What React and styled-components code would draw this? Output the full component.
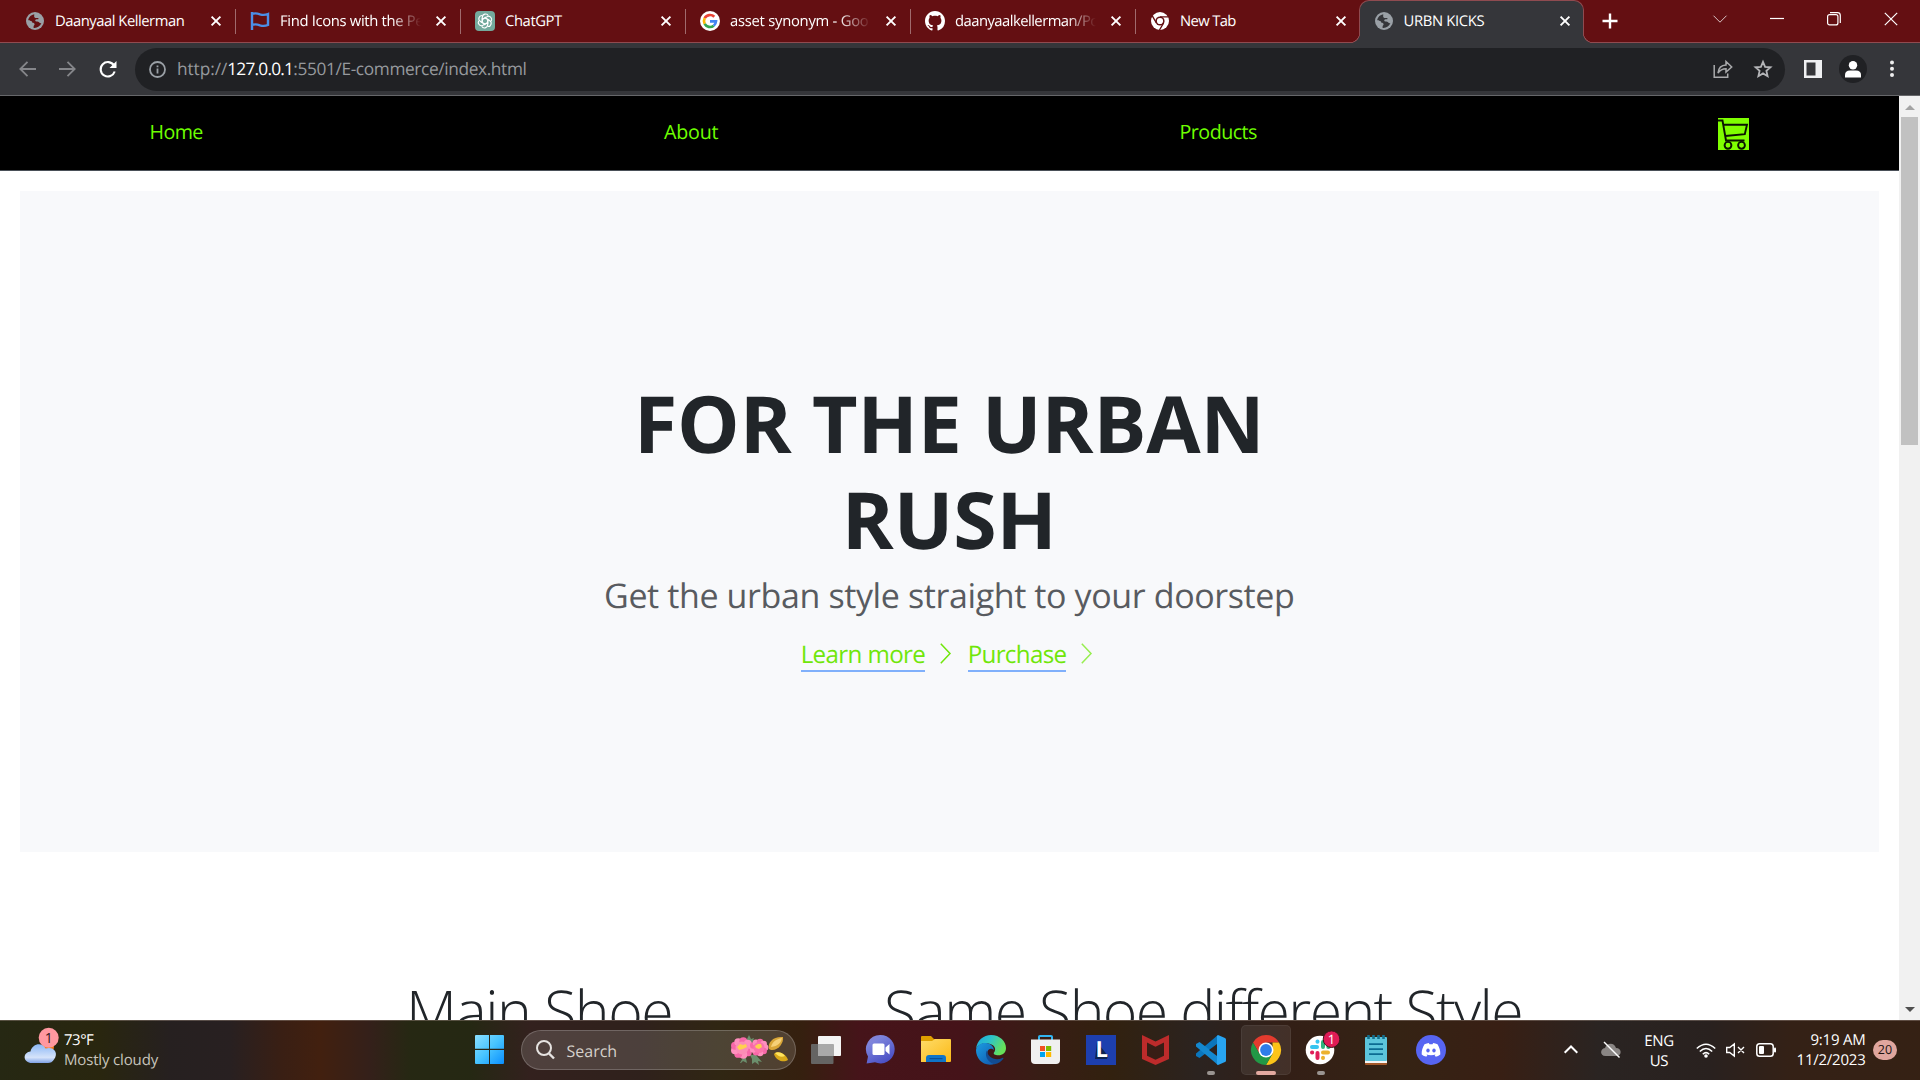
import React from "react";
import styled, { createGlobalStyle, css } from "styled-components";

const GlobalStyle = createGlobalStyle`
  * { box-sizing: border-box; }
  body { margin: 0; overflow: hidden; }
  svg { display: block; flex: none; overflow: visible; }
`;

const Desktop = styled.div`
  width: 1920px;
  height: 1080px;
  display: flex;
  flex-direction: column;
  overflow: hidden;
  background: #fff;
  font-family: "Open Sans", "Noto Sans", sans-serif;
  text-rendering: geometricPrecision;
`;

/* ---------- Browser tabs ---------- */

const TabStrip = styled.div`
  height: 43px;
  flex: none;
  display: flex;
  padding-left: 10.5px;
  background: #640f12;
  border-bottom: 1px solid #8f4b50;
`;

const flare = css`
  content: "";
  position: absolute;
  bottom: 0;
  width: 10px;
  height: 10px;
`;

const Tab = styled.div`
  position: relative;
  width: 225px;
  height: 42px;
  display: flex;
  align-items: center;
  padding: 0 0 1px 14.5px;
  color: #fff;
  ${(p) =>
    p.$active
      ? css`
          height: 43px;
          margin-left: -1.5px;
          padding-bottom: 2px;
          padding-left: 13.5px;
          background: #35363a;
          border: 1px solid #8f4b50;
          border-bottom: 0;
          border-radius: 10px 10px 0 0;
          &::before {
            ${flare}
            left: -10px;
            background: radial-gradient(circle at 0 0, transparent 9px, #8f4b50 9.3px, #8f4b50 9.8px, #35363a 10.3px);
          }
          &::after {
            ${flare}
            right: -10px;
            background: radial-gradient(circle at 100% 0, transparent 9px, #8f4b50 9.3px, #8f4b50 9.8px, #35363a 10.3px);
          }
        `
      : css`
          &::after {
            content: "";
            position: absolute;
            right: 0;
            top: 9px;
            width: 1px;
            height: 25px;
            background: ${p.$last ? "transparent" : "#a06a6d"};
          }
        `}
`;

const Favicon = styled.span`
  width: 20px;
  height: 20px;
  display: flex;
  align-items: center;
  justify-content: center;
  color: ${(p) => (p.$active ? "#35363a" : "#640f12")};
`;

const TabTitle = styled.span`
  width: 141px;
  margin: 0 10px;
  overflow: hidden;
  white-space: nowrap;
  font-size: 14.8px;
  font-weight: 430;
  line-height: 24px;
  letter-spacing: ${(p) => p.$ls}px;
  ${(p) =>
    p.$fade &&
    css`
      mask-image: linear-gradient(to right, #000 ${p.$fade}px, transparent 141px);
    `}
`;

const TabClose = styled.span`
  width: 20px;
  height: 20px;
  display: flex;
  align-items: center;
  justify-content: center;
`;

const NewTabButton = styled.div`
  width: 52px;
  height: 42px;
  display: flex;
  align-items: center;
  justify-content: center;
`;

const WindowControls = styled.div`
  display: flex;
  margin-left: auto;
`;

const WindowControl = styled.div`
  width: 57.2px;
  height: 38px;
  display: flex;
  align-items: center;
  justify-content: center;
`;

/* ---------- Browser toolbar ---------- */

const Toolbar = styled.div`
  height: 53px;
  flex: none;
  display: flex;
  align-items: center;
  padding-left: 19px;
  background: #35363a;
  border-bottom: 1px solid #66676a;
`;

const NavButtons = styled.div`
  display: flex;
  gap: 23px;
  width: 116px;
`;

const AddressBar = styled.div`
  width: 1650px;
  height: 43px;
  display: flex;
  align-items: center;
  padding: 0 13px 0 14px;
  border-radius: 22px;
  background: #202124;
`;

const Url = styled.div`
  flex: 1;
  margin-left: 11px;
  padding-top: 2px;
  display: flex;
  white-space: pre;
  color: #96999d;
  font-size: 17.3px;
  font-weight: 420;
  line-height: 26px;
`;

const UrlPart = styled.span`
  letter-spacing: ${(p) => p.$ls}px;
  color: ${(p) => (p.$host ? "#fff" : "inherit")};
`;

const AddressActions = styled.div`
  display: flex;
  align-items: center;
  gap: 21px;
`;

const ToolbarActions = styled.div`
  display: flex;
  align-items: center;
  margin-left: 19px;
`;

const Avatar = styled.div`
  width: 28px;
  height: 28px;
  margin: 0 23px 0 17px;
  border-radius: 50%;
  background: #202124;
  display: flex;
  align-items: center;
  justify-content: center;
`;

/* ---------- Web page ---------- */

const Viewport = styled.div`
  height: 924px;
  flex: none;
  display: flex;
  overflow: hidden;
`;

const Page = styled.main`
  flex: 1;
  background: #fff;
  overflow: hidden;
`;

const SiteNav = styled.nav`
  height: 75px;
  display: flex;
  justify-content: space-between;
  align-items: flex-start;
  padding: 20px 150px 0 149.5px;
  background: #000;
  border-bottom: 1px solid #4a5058;
`;

const NavLink = styled.a`
  padding-top: 1px;
  color: #6eff00;
  font-size: 19.7px;
  font-weight: 430;
  line-height: 30px;
  letter-spacing: ${(p) => p.$ls}px;
`;

const CartButton = styled.div`
  width: 31px;
  height: 32px;
  margin-top: 2px;
  background: #7fff00;
`;

const Hero = styled.section`
  height: 661px;
  margin: 20px 20.5px 0 20px;
  padding-top: 184.8px;
  display: flex;
  flex-direction: column;
  align-items: center;
  background: #f8f9fb;
`;

const HeroTitle = styled.h1`
  width: 700px;
  margin: 0;
  text-align: center;
  color: #212529;
  font-size: 78.8px;
  font-weight: 700;
  line-height: 96px;
  letter-spacing: -0.1px;
`;

const HeroSubtitle = styled.p`
  margin: 6.4px 0 0;
  color: #585b60;
  font-size: 34px;
  line-height: 42px;
  letter-spacing: -0.39px;
  white-space: nowrap;
`;

const HeroLinks = styled.div`
  display: flex;
  align-items: flex-start;
  margin-top: 23.8px;
  padding-right: 6px;
`;

const HeroLink = styled.a`
  color: #70e60a;
  font-size: 24.2px;
  font-weight: 420;
  line-height: 30px;
  letter-spacing: ${(p) => p.$ls}px;
  border-bottom: 2px solid #80b0fb;
`;

const HeroChevron = styled.span`
  margin: 3px ${(p) => p.$after}px 0 14.500px;
`;

const Sections = styled.section`
  display: flex;
  margin-top: 122.6px;
  padding-left: 406px;
  gap: 215px;
`;

const SectionTitle = styled.h2`
  margin: 0;
  width: ${(p) => p.$w}px;
  white-space: nowrap;
  color: #212529;
  font-size: 59px;
  font-weight: 300;
  line-height: 72px;
  letter-spacing: ${(p) => p.$ls}px;
`;

const Scrollbar = styled.div`
  width: 21px;
  display: flex;
  flex-direction: column;
  align-items: center;
  background: #f1f1f1;
`;

const ScrollArrow = styled.div`
  height: 21px;
  display: flex;
  align-items: center;
  justify-content: center;
`;

const ScrollThumb = styled.div`
  width: 17px;
  height: 328px;
  margin-bottom: auto;
  background: #c1c1c1;
`;

/* ---------- Taskbar ---------- */

const Taskbar = styled.footer`
  height: 60px;
  flex: none;
  display: grid;
  grid-template-columns: 461.5px auto 1fr;
  border-top: 1px solid rgba(130, 115, 105, 0.55);
  background: linear-gradient(
    to right,
    #262813 0, #29260f 100px, #262020 170px, #282021 230px, #391f14 280px,
    #42200f 320px, #34201a 370px, #262813 410px, #252813 470px, #33211e 530px,
    #2f211c 640px, #302613 720px, #35200f 800px, #46141a 860px, #451319 960px,
    #381d15 1040px, #32210f 1110px, #2b2320 1200px, #331f16 1290px, #352314 1400px,
    #381f14 1500px, #2a2422 1600px, #29211f 1710px, #342116 1790px, #352114 1920px
  );
  color: #fff;
`;

const Weather = styled.div`
  display: flex;
  align-items: flex-start;
  padding: 8px 0 0 24px;
`;

const WeatherIcon = styled.div`
  width: 40px;
`;

const TextStack = styled.div`
  display: flex;
  flex-direction: column;
  align-items: ${(p) => p.$align || "flex-start"};
  padding-top: ${(p) => p.$drop || 0}px;
  font-size: 15px;
  line-height: 20px;
  white-space: nowrap;
`;

const StackLine = styled.span`
  letter-spacing: ${(p) => p.$ls}px;
  color: ${(p) => (p.$muted ? "#c8c5bd" : "#fff")};
`;

const Apps = styled.div`
  display: flex;
  align-items: center;
`;

const AppCell = styled.div`
  position: relative;
  width: 55px;
  height: 59px;
  padding-bottom: 2px;
  display: flex;
  align-items: center;
  justify-content: center;
`;

const ActiveAppCell = styled(AppCell)`
  &::before {
    content: "";
    position: absolute;
    inset: 4px 2.5px 5px;
    border-radius: 5px;
    background: rgba(255, 255, 255, 0.08);
    border: 1px solid rgba(255, 255, 255, 0.06);
  }
`;

const AppGlyph = styled.span`
  position: relative;
`;

const Running = styled.span`
  position: absolute;
  bottom: 5px;
  left: 50%;
  transform: translateX(-50%);
  width: ${(p) => (p.$focused ? 20 : 8)}px;
  height: 4px;
  border-radius: 2px;
  background: ${(p) => (p.$focused ? "#e3a9a0" : "#9a9491")};
`;

const SearchBox = styled.div`
  width: 275px;
  height: 40px;
  margin: 0 2.500px 1px 4px;
  padding: 0 6px 0 14px;
  display: flex;
  align-items: center;
  border-radius: 20px;
  border: 1px solid rgba(255, 255, 255, 0.2);
  background: rgba(255, 255, 255, 0.14);
`;

const SearchLabel = styled.span`
  flex: 1;
  margin-left: 12px;
  padding-top: 1px;
  color: #d6d1cb;
  font-size: 16px;
  line-height: 22px;
`;

const Tray = styled.div`
  display: flex;
  align-items: center;
  justify-content: flex-end;
  padding: 0 23px 1px 0;
`;

const TrayItem = styled.div`
  width: ${(p) => p.$w}px;
  margin-right: ${(p) => p.$gap}px;
  display: flex;
  flex-direction: column;
  align-items: ${(p) => p.$align || "center"};
`;

const NotificationCount = styled.div`
  width: 24px;
  height: 20px;
  border-radius: 10px;
  background: #e0a69e;
  color: #1c1210;
  font-size: 12.5px;
  line-height: 20px;
  text-align: center;
`;

/* ---------- Icons ---------- */

const Globe = () => (
  <svg width="18" height="18" viewBox="0 0 18 18">
    <circle cx="9" cy="9" r="9" fill="#9aa0a6" />
    <path fill="currentColor" d="M8.2 2.2c-3 .6-5.2 2.6-6 5.4.4 1.300 1.600 1.400 2.800 1.400 1 .2 1.400.9 1.300 1.800 1.100.1 2.100.3 2.300 1.400.1 1-.9 1.200-1 2.100v1.700c3.500.4 6.700-1.800 7.800-4.900-1.200.6-2-.2-2.600-1-.8-.8-2.200-.4-3.200-.9-.8-.7-.2-1.900.9-2 .9-.1 1.500.2 2-.3.4-.8-.6-1.100-1.500-1-1.100.2-2.500.1-2.800-1.100-.2-1 .2-1.700 0-2.600z" />
  </svg>
);

const Flag = () => (
  <svg width="20" height="20" viewBox="0 0 20 20" fill="none" stroke="#4b8fe8" strokeWidth="2.400">
    <path d="M2 1v18M2 3c3-1.200 5.500-.6 8 .3 2.500.8 5 .9 8-.3v11c-3 1.200-5.500 1.100-8 .3-2.500-.9-5-1.500-8-.3" />
  </svg>
);

const ChatGpt = () => (
  <svg width="20" height="20" viewBox="0 0 20 20">
    <rect width="20" height="20" rx="4" fill="#74aa9c" />
    <g fill="none" stroke="#fff" strokeWidth="1.1">
      {[0, 60, 120, 180, 240, 300].map((a) => (
        <path key={a} transform={`rotate(${a} 10 10)`} d="M7.300 11.600V6.400c0-3.700 4.600-4.400 6-1.700M7.300 8.300l4-2.300" />
      ))}
    </g>
  </svg>
);

const Google = () => (
  <svg width="20" height="20" viewBox="0 0 20 20">
    <circle cx="10" cy="10" r="10" fill="#fff" />
    <g fill="none" strokeWidth="2.700">
      <path stroke="#ea4335" d="M14.300 5.800A6 6 0 0 0 4.700 7.200" />
      <path stroke="#fbbc05" d="M4.700 7.200a6 6 0 0 0 0 5.600" />
      <path stroke="#34a853" d="M4.700 12.800a6 6 0 0 0 9 1.900" />
      <path stroke="#4285f4" d="M13.700 14.700A6 6 0 0 0 16 10.300h-6" />
    </g>
  </svg>
);

const GitHub = () => (
  <svg width="20" height="20" viewBox="0 0 16 16">
    <path fill="#fff" d="M8 0C3.580 0 0 3.580 0 8c0 3.540 2.290 6.530 5.470 7.590.4.070.55-.17.55-.38 0-.19-.01-.82-.01-1.490-2.010.37-2.530-.49-2.690-.94-.09-.23-.48-.94-.82-1.130-.28-.15-.68-.52-.01-.53.63-.01 1.080.58 1.230.82.72 1.210 1.870.87 2.330.66.070-.52.28-.87.51-1.070-1.780-.2-3.640-.89-3.640-3.950 0-.87.31-1.590.82-2.150-.08-.2-.36-1.020.08-2.120 0 0 .67-.21 2.200.82.64-.18 1.320-.27 2-.27s1.360.09 2 .27c1.530-1.040 2.200-.82 2.200-.82.44 1.100.16 1.920.08 2.120.51.56.82 1.270.82 2.150 0 3.070-1.870 3.750-3.650 3.950.29.25.54.73.54 1.480 0 1.070-.01 1.930-.01 2.200 0 .21.15.46.55.38A8.010 8.010 0 0 0 16 8c0-4.420-3.580-8-8-8z" />
  </svg>
);

const ChromeMono = () => (
  <svg width="18" height="18" viewBox="0 0 18 18">
    <circle cx="9" cy="9" r="9" fill="#fff" />
    <circle cx="9" cy="9" r="4.600" fill="#640f12" />
    <circle cx="9" cy="9" r="3.100" fill="#fff" />
    <g stroke="#640f12" strokeWidth="1.400">
      <path d="M9 4.900h8.300M5.400 11L1.300 3.900M12.600 11l-4.100 7" />
    </g>
  </svg>
);

const Close = () => (
  <svg width="10" height="10" viewBox="0 0 10 10" stroke="#fff" strokeWidth="1.900">
    <path d="M.6.600l8.800 8.800M9.400.600L.6 9.400" />
  </svg>
);

const Plus = () => (
  <svg width="16" height="16" viewBox="0 0 16 16" stroke="#fff" strokeWidth="2.400">
    <path d="M8 .5v15M.5 8h15" />
  </svg>
);

const LineIcon = ({ w, h, d, stroke = "#fff", sw = 1.2, children }) => (
  <svg width={w} height={h} viewBox={`0 0 ${w} ${h}`} fill="none" stroke={stroke} strokeWidth={sw}>
    {d && <path d={d} />}
    {children}
  </svg>
);

const Cart = () => (
  <svg width="31" height="32" viewBox="0 0 31 32" fill="none" stroke="#0b1400" strokeWidth="1.900">
    <path d="M0 2.500h4.500L8 22.500h18.500M5.500 6.800H29l-2.200 9.400L7.200 18" />
    <circle cx="10" cy="27.300" r="3.400" />
    <circle cx="23.500" cy="27.300" r="3.400" />
  </svg>
);

const WeatherCloud = () => (
  <svg width="34" height="38" viewBox="0 0 34 38">
    <defs>
      <linearGradient id="cloud" x1="0" y1="0" x2="0" y2="1">
        <stop offset="0" stopColor="#8db8f5" />
        <stop offset=".7" stopColor="#d5e3fa" />
        <stop offset="1" stopColor="#7fa2e6" />
      </linearGradient>
    </defs>
    <circle cx="24" cy="18" r="6" fill="#f47b1c" />
    <path fill="url(#cloud)" d="M8 34c-9 0-10-10.500-1.500-11.500C8 15 18 12.500 21.500 19.500 30 17 35 24 30 30.500c-1.500 2.500-3.500 3.500-6 3.500z" />
    <circle cx="24.700" cy="8.700" r="10" fill="#ff98a0" />
    <text x="24.700" y="13.700" textAnchor="middle" fontFamily="Open Sans" fontSize="14" fill="#33171b">1</text>
  </svg>
);

const WindowsLogo = () => (
  <svg width="29" height="29" viewBox="0 0 29 29">
    <defs>
      <linearGradient id="win" gradientUnits="userSpaceOnUse" x1="0" y1="0" x2="29" y2="29">
        <stop offset="0" stopColor="#8be0ff" />
        <stop offset=".5" stopColor="#47c4ff" />
        <stop offset="1" stopColor="#0a8fff" />
      </linearGradient>
    </defs>
    <path fill="url(#win)" d="M1 0h13v13.800H0V1q0-1 1-1zM15 0h13q1 0 1 1v12.800H15zM0 15h14v14H1q-1 0-1-1zM15 15h14v13q0 1-1 1H15z" />
  </svg>
);

const SearchGlass = () => (
  <svg width="19" height="20" viewBox="0 0 19 20" fill="none" stroke="#e6e3e1" strokeWidth="2">
    <circle cx="8" cy="8" r="7" />
    <path d="M13 13.500l5 5" strokeWidth="2.400" />
  </svg>
);

const petals = (cx, cy, r) =>
  [0, 40, 80, 120, 160, 200, 240, 280, 320].map((a) => {
    const t = (a * Math.PI) / 180;
    return <circle key={a} cx={cx + Math.cos(t) * r * 0.68} cy={cy + Math.sin(t) * r * 0.62} r={r * 0.36} fill={a % 80 ? "#f768a8" : "#ff8fbd"} />;
  });

const Flowers = () => (
  <svg width="58" height="30" viewBox="0 0 58 30">
    <path d="M15 6l3-6 2 4 3-1-2 6zM9 28l5-9 2 9-4-2-2 2zM21 24l-2-4 6 0 6 7-4-1 1 4-4-3-3 2z" fill="#6b8f6c" />
    {petals(11, 13, 11)}
    <circle cx="11" cy="13" r="6.500" fill="#fb8db6" />
    {petals(28, 12.500, 9)}
    <circle cx="28" cy="12.500" r="5.500" fill="#fb74ab" />
    <path d="M6 12l3-3 3 1 3-1 1 3-4 2-4 1zM24 11l3-2 3 0 1 3-3 2-3-1z" fill="#ffd04f" />
    <path d="M38 14c-2-7 5-13 14-12 1 6-5 14-12 13z" fill="#d9a638" />
    <path d="M40 12c1-5 5-8 11-9-1 5-4 8-11 9z" fill="#f6d178" />
    <path d="M43 19c3-4 12-1 14 6-4 3-12 1-14-6z" fill="#d9a91a" />
    <path d="M44 18c3-2 8 0 10 3-4 2-7 0-10-3z" fill="#ffe45d" />
  </svg>
);

const TaskView = () => (
  <svg width="30" height="28" viewBox="0 0 30 28">
    <rect x="7" y="0" width="23" height="20" rx="1" fill="#f4f4f4" />
    <rect x="0" y="8" width="22.500" height="20" rx="1" fill="#656463" />
    <rect x="7" y="8" width="15.500" height="12" fill="#a9a9a9" />
  </svg>
);

const Chat = () => (
  <svg width="29" height="29" viewBox="0 0 29 29">
    <defs>
      <linearGradient id="chat" x1="0" y1="0" x2=".6" y2="1">
        <stop offset="0" stopColor="#8b83cf" />
        <stop offset=".3" stopColor="#7c83dc" />
        <stop offset="1" stopColor="#4b50c5" />
      </linearGradient>
    </defs>
    <path fill="url(#chat)" d="M14.500 0A14.200 14.200 0 1 1 9 27.300L.6 28.500 2 21.500A14.200 14.200 0 0 1 14.500 0z" />
    <rect x="6.500" y="8.500" width="12" height="11.500" rx="1.500" fill="#fff" />
    <path fill="#fff" d="M19.500 12.500l4-3.500v10.500l-4-3.500z" />
  </svg>
);

const Folder = () => (
  <svg width="30" height="27" viewBox="0 0 30 27">
    <defs>
      <linearGradient id="folder" x1="0" y1="0" x2="1" y2="1">
        <stop offset="0" stopColor="#ffdc69" />
        <stop offset="1" stopColor="#fbb916" />
      </linearGradient>
    </defs>
    <path fill="#dfa000" d="M0 1q0-1 1-1h9l3 3h15v8H0z" />
    <path fill="url(#folder)" d="M0 5h11l3-2h15q1 0 1 1v21q0 1-1 1H0z" />
    <path fill="#0f75c8" d="M5 26v-4q0-3 3-3h14q3 0 3 3v4z" />
    <path fill="#0a4f96" d="M8.500 22h13v1.200h-13z" />
  </svg>
);

const Edge = () => (
  <svg width="30" height="30" viewBox="0 0 30 30">
    <defs>
      <linearGradient id="edgeTop" x1="0" y1="0" x2="1" y2=".4">
        <stop offset="0" stopColor="#1aa6e0" />
        <stop offset=".5" stopColor="#2ec3c8" />
        <stop offset="1" stopColor="#66e05a" />
      </linearGradient>
      <linearGradient id="edgeLow" x1="0" y1="0" x2="1" y2="1">
        <stop offset="0" stopColor="#1b9de2" />
        <stop offset=".8" stopColor="#1261b5" />
      </linearGradient>
    </defs>
    <path fill="url(#edgeTop)" d="M0 14C.8 5.500 7.500 0 15 0c9 0 15 6.500 15 13 0 5-3.500 7.300-7.500 7.300-3.800 0-5.500-1.500-4.500-2.800 1.700-2 1.700-5.500-1.500-7.500C11 6.700 2.500 8 0 14z" />
    <path fill="url(#edgeLow)" d="M0 15C1 9.500 6 7.500 10 8c4.500.5 8 3.500 7.800 7-2-2.400-5.600-1.500-6.300 1.500C10.300 22 15.500 27 22 26.500c-2 2-4.500 3.300-8 3.300C5.500 29.300 0 23 0 15z" />
    <path fill="#124c93" d="M11 15.500c-2.500 3-.8 11.500 7.500 13.800 4-.8 7-3 8.800-5.600.4-.8-.4-1-1-.7-7 3.300-14.800-.5-15.300-7.500z" />
  </svg>
);

const Store = () => (
  <svg width="29" height="29" viewBox="0 0 29 29">
    <path d="M8 6V1.800Q8 1 9 1h11q1 0 1 .8V6" fill="none" stroke="#32b5f0" strokeWidth="2" />
    <path fill="#f0f0f0" d="M0 4.500h29V25q0 4-4 4H4q-4 0-4-4z" />
    <path fill="#f25022" d="M9 11h5v5H9z" />
    <path fill="#7fba00" d="M15 11h5.200v5H15z" />
    <path fill="#00a4ef" d="M9 17h5v5H9z" />
    <path fill="#ffb900" d="M15 17h5.200v5H15z" />
  </svg>
);

const LTile = () => (
  <svg width="30" height="30" viewBox="0 0 30 30">
    <rect width="30" height="30" fill="#1d3fae" />
    <path d="M11 7l-2 17h12l1-3z" fill="#0e2451" />
    <text x="9.500" y="22" fontFamily="Open Sans" fontWeight="700" fontSize="22" fill="#fff">L</text>
  </svg>
);

const McAfee = () => (
  <svg width="27" height="30" viewBox="0 0 27 30">
    <path fill="#bd2b2b" d="M0 0l13.500 6.500L27 0v24l-13.500 6L0 24z" />
    <path fill="#381d15" d="M5 7.500l8.500 4.200L22 7.500v13.300l-8.500 3.900L5 20.800z" />
  </svg>
);

const VsCode = () => (
  <svg width="30" height="30" viewBox="0 0 30 30">
    <path fill="#0b76bd" d="M22 0v9L3.500 23 0 21v-2.500z" />
    <path fill="#1488cf" d="M22 30v-9L3.500 7 0 9v2.500z" />
    <path fill="#28a5f2" d="M22 0l7 3q1 .5 1 1.500v21q0 1-1 1.500l-7 3q-2-1-1-2.500V2.500Q20 1 22 0z" />
    <path fill="#2b2320" d="M21 9v12l-8-6z" />
  </svg>
);

const ChromeLogo = () => (
  <svg width="30" height="30" viewBox="0 0 30 30">
    <path fill="#e33b2e" d="M2 7.500A15 15 0 0 1 28 7.500H15L8.500 18.700z" />
    <path fill="#fcc419" d="M28 7.500A15 15 0 0 1 15 30l6.500-11.300V7.500z" />
    <path fill="#229846" d="M2 7.500A15 15 0 0 0 15 30l6.500-11.200H8.500z" />
    <circle cx="15" cy="15" r="7.500" fill="#fff" />
    <circle cx="15" cy="15" r="5.900" fill="#2f7de9" />
  </svg>
);

const Slack = () => (
  <svg width="32" height="34" viewBox="0 0 32 34">
    <circle cx="15" cy="17" r="14.300" fill="#fff" />
    <g strokeWidth="4" strokeLinecap="round">
      <path stroke="#36c5f0" d="M7 14h5M12.500 8.500v.2" />
      <path stroke="#2eb67d" d="M18 9v5M23.500 14h-.2" />
      <path stroke="#ecb22e" d="M18 19.500h5M18 25v-.2" />
      <path stroke="#e01e5a" d="M12.500 20v5M7 19.500h.2" />
    </g>
    <circle cx="26.500" cy="6.200" r="8.300" fill="#df1b56" stroke="#40141a" strokeWidth="1" />
    <text x="26.500" y="11" textAnchor="middle" fontFamily="Open Sans" fontSize="13" fill="#fff">1</text>
  </svg>
);

const Notepad = () => (
  <svg width="22" height="30" viewBox="0 0 22 30">
    <rect y="24" width="22" height="6" rx="1" fill="#a4592a" />
    <rect y="23" width="22" height="5" fill="#f4f4f4" />
    <rect y="2" width="22" height="24" rx="1" fill="#5cc5dc" />
    <path d="M4 9.200h14M4 14.200h14M4 19.200h14" stroke="#0c6b92" strokeWidth="1.800" />
    <path d="M3.500 0v4M8.500 0v4M13.500 0v4M18.500 0v4" stroke="#14708f" strokeWidth="2.600" />
  </svg>
);

const Discord = () => (
  <svg width="30" height="30" viewBox="0 0 30 30">
    <circle cx="15" cy="15" r="15" fill="#5765f2" />
    <path fill="#fff" d="M8.500 9.200c1.600-.8 3-1.200 4.300-1.300l.7 1.300h3l.7-1.300c1.400.2 2.800.6 4.300 1.300 2 3.200 3 6.600 2.800 10.300-1.500 1.200-3 1.900-4.600 2.200l-1.100-1.700 1.300-.7c-3.100 1.300-6.700 1.300-9.800 0l1.300.7-1.100 1.700c-1.600-.4-3.200-1-4.600-2.200-.2-3.700.8-7.200 2.800-10.300z" />
    <ellipse cx="12" cy="15.500" rx="1.700" ry="1.900" fill="#5765f2" />
    <ellipse cx="18" cy="15.500" rx="1.700" ry="1.900" fill="#5765f2" />
  </svg>
);

/* ---------- Data ---------- */

const tabs = [
  { title: "Daanyaal Kellerman", icon: Globe, ls: -0.48 },
  { title: "Find Icons with the Pe", icon: Flag, ls: -0.33, fade: 112 },
  { title: "ChatGPT", icon: ChatGpt, ls: -0.41 },
  { title: "asset synonym - Goo", icon: Google, ls: -0.26, fade: 108 },
  { title: "daanyaalkellerman/Po", icon: GitHub, ls: -0.53, fade: 112 },
  { title: "New Tab", icon: ChromeMono, ls: -0.63 },
  { title: "URBN KICKS", icon: Globe, ls: -0.34, active: true },
];

const pinned = [
  { name: "taskview", icon: TaskView },
  { name: "chat", icon: Chat },
  { name: "files", icon: Folder },
  { name: "edge", icon: Edge },
  { name: "store", icon: Store },
  { name: "l", icon: LTile },
  { name: "mcafee", icon: McAfee },
  { name: "code", icon: VsCode, running: true },
  { name: "chrome", icon: ChromeLogo, running: true, focused: true },
  { name: "slack", icon: Slack, running: true },
  { name: "notepad", icon: Notepad },
  { name: "discord", icon: Discord },
];

const BrowserTabs = () => (
  <TabStrip>
    {tabs.map((t, i) => (
      <Tab key={t.title} $active={t.active} $last={i === 5}>
        <Favicon $active={t.active}>
          <t.icon />
        </Favicon>
        <TabTitle $ls={t.ls} $fade={t.fade}>{t.title}</TabTitle>
        <TabClose>
          <Close />
        </TabClose>
      </Tab>
    ))}
    <NewTabButton>
      <Plus />
    </NewTabButton>
    <WindowControls>
      <WindowControl><LineIcon w={14} h={8} d="M.5.700L7 7.200 13.500.700" sw={1} stroke="#d9c3c4" /></WindowControl>
      <WindowControl><LineIcon w={14} h={2} d="M0 .500h14" sw={1.2} /></WindowControl>
      <WindowControl>
        <LineIcon w={14} h={14}>
          <rect x=".6" y="2.600" width="10.300" height="10.300" rx="2" />
          <path d="M3 .600h7.500q2.800 0 2.800 2.800v7.600" />
        </LineIcon>
      </WindowControl>
      <WindowControl><LineIcon w={14} h={14} d="M.8.800l12.400 12.400M13.200.800L.8 13.200" /></WindowControl>
    </WindowControls>
  </TabStrip>
);

const BrowserToolbar = () => (
  <Toolbar>
    <NavButtons>
      <LineIcon w={17} h={16} d="M17 8H1.500M8.500.800L1.300 8l7.200 7.200" stroke="#85868a" sw={1.8} />
      <LineIcon w={17} h={16} d="M0 8h15.500M8.500.800L15.700 8l-7.200 7.200" stroke="#85868a" sw={1.8} />
      <svg width="18" height="16" viewBox="0 0 18 16">
        <path d="M15 4.500A7.200 7.200 0 1 0 15.700 10.500" fill="none" stroke="#fff" strokeWidth="2.100" />
        <path d="M17.500 0v7H10.500z" fill="#fff" />
      </svg>
    </NavButtons>
    <AddressBar>
      <LineIcon w={17} h={17} stroke="#9aa0a6" sw={1.8}>
        <circle cx="8.500" cy="8.500" r="7.500" />
        <path d="M8.500 7.600v5M8.500 4.500v1.800" />
      </LineIcon>
      <Url>
        <UrlPart $ls={-0.08}>http://</UrlPart>
        <UrlPart $host $ls={-0.76}>127.0.0.1</UrlPart>
        <UrlPart $ls={-0.37}>:5501/E-commerce/index.html</UrlPart>
      </Url>
      <AddressActions>
        <LineIcon w={20} h={18} stroke="#a9aaac" sw={1.5}>
          <path d="M1.200 5v12.200h13.500v-3.700" />
          <path d="M5 13c.5-5 3.300-7.800 8-8V1.500L18.700 7 13 12V8.700C9.500 8.700 7 10 5 13z" />
        </LineIcon>
        <LineIcon w={18} h={18} stroke="#b4b5b8" sw={1.8} d="M9 1.800l2.100 5 5.400.500-4.100 3.600 1.200 5.300L9 13.400l-4.600 2.800 1.200-5.300L1.500 7.300l5.400-.5z" />
      </AddressActions>
    </AddressBar>
    <ToolbarActions>
      <svg width="18" height="18" viewBox="0 0 18 18">
        <path fill="#eff0f2" fillRule="evenodd" d="M0 0h18v18H0zM2.500 2.500v13h9v-13z" />
      </svg>
      <Avatar>
        <svg width="16" height="17" viewBox="0 0 16 17" fill="#fff">
          <circle cx="8" cy="4.200" r="4.200" />
          <path d="M0 16.500V14q0-4.500 5-4.500h6q5 0 5 4.500v2.500z" />
        </svg>
      </Avatar>
      <svg width="4" height="18" viewBox="0 0 4 18" fill="#eee">
        <circle cx="2" cy="2.500" r="2" />
        <circle cx="2" cy="8.700" r="2" />
        <circle cx="2" cy="15" r="2" />
      </svg>
    </ToolbarActions>
  </Toolbar>
);

const Chevron = ({ color }) => (
  <svg width="11" height="21" viewBox="0 0 11 21" fill="none" stroke={color} strokeWidth="1.500">
    <path d="M.8.800l9.200 9.700-9.200 9.700" />
  </svg>
);

const Storefront = () => (
  <Viewport>
    <Page>
      <SiteNav>
        <NavLink $ls={-0.6}>Home</NavLink>
        <NavLink $ls={-0.18}>About</NavLink>
        <NavLink $ls={-0.55}>Products</NavLink>
        <CartButton>
          <Cart />
        </CartButton>
      </SiteNav>
      <Hero>
        <HeroTitle>FOR THE URBAN RUSH</HeroTitle>
        <HeroSubtitle>Get the urban style straight to your doorstep</HeroSubtitle>
        <HeroLinks>
          <HeroLink $ls={-0.65}>Learn more</HeroLink>
          <HeroChevron $after={17}><Chevron color="#70e60a" /></HeroChevron>
          <HeroLink $ls={-0.7}>Purchase</HeroLink>
          <HeroChevron $after={0}><Chevron color="#97ee50" /></HeroChevron>
        </HeroLinks>
      </Hero>
      <Sections>
        <SectionTitle $w={263} $ls={-1.5}>Main Shoe</SectionTitle>
        <SectionTitle $w={640} $ls={-1.64}>Same Shoe different Style</SectionTitle>
      </Sections>
    </Page>
    <Scrollbar>
      <ScrollArrow>
        <svg width="10" height="6" viewBox="0 0 10 6"><path d="M0 6L5 1l5 5z" fill="#a3a3a3" /></svg>
      </ScrollArrow>
      <ScrollThumb />
      <ScrollArrow>
        <svg width="10" height="6" viewBox="0 0 10 6"><path d="M0 0l5 5 5-5z" fill="#505050" /></svg>
      </ScrollArrow>
    </Scrollbar>
  </Viewport>
);

const WindowsTaskbar = () => (
  <Taskbar>
    <Weather>
      <WeatherIcon>
        <WeatherCloud />
      </WeatherIcon>
      <TextStack $drop={1}>
        <StackLine $ls={-0.5}>73°F</StackLine>
        <StackLine $muted $ls={-0.16}>Mostly cloudy</StackLine>
      </TextStack>
    </Weather>
    <Apps>
      <AppCell>
        <WindowsLogo />
      </AppCell>
      <SearchBox>
        <SearchGlass />
        <SearchLabel>Search</SearchLabel>
        <Flowers />
      </SearchBox>
      {pinned.map((a) => {
        const Cell = a.focused ? ActiveAppCell : AppCell;
        return (
          <Cell key={a.name}>
            <AppGlyph>
              <a.icon />
            </AppGlyph>
            {a.running && <Running $focused={a.focused} />}
          </Cell>
        );
      })}
    </Apps>
    <Tray>
      <TrayItem $w={14} $gap={23}>
        <LineIcon w={14} h={8} sw={2} d="M.7 6.700L7 .5l6.300 6.200" />
      </TrayItem>
      <TrayItem $w={20} $gap={23.5}>
        <svg width="20" height="16" viewBox="0 0 20 16">
          <path fill="#8a8684" d="M4.500 14C-1.500 14-1 6.500 4 6 5.500.5 13.500 0 15 6c6 0 6.500 8 0 8z" />
          <path d="M3 0l15.500 15.500" stroke="#fff" strokeWidth="1.400" />
        </svg>
      </TrayItem>
      <TrayItem $w={29} $gap={22.5}>
        <TextStack $align="center" $drop={1}>
          <StackLine $ls={-0.4}>ENG</StackLine>
          <StackLine $ls={-0.4}>US</StackLine>
        </TextStack>
      </TrayItem>
      <TrayItem $w={20} $gap={10}>
        <LineIcon w={20} h={15} sw={1.6}>
          <path d="M.8 5.500Q10-3 19.200 5.500M3.800 8.500Q10 2.500 16.200 8.500M6.800 11.200Q10 8 13.200 11.200" />
          <circle cx="10" cy="13" r="1.800" fill="#fff" stroke="none" />
        </LineIcon>
      </TrayItem>
      <TrayItem $w={19} $gap={11}>
        <LineIcon w={19} h={14} sw={1.4} d="M.7 4.500h3L8.300.900v12.200L3.700 9.500h-3zM12 4l6 6M18 4l-6 6" />
      </TrayItem>
      <TrayItem $w={20} $gap={20.5}>
        <svg width="20" height="14" viewBox="0 0 20 14">
          <rect x=".8" y=".8" width="16.400" height="12.400" rx="2.800" fill="none" stroke="#fff" strokeWidth="1.500" />
          <rect x="3" y="3" width="5" height="8" rx="1" fill="#fff" />
          <rect x="18" y="4.500" width="2" height="5" rx="1" fill="#fff" />
        </svg>
      </TrayItem>
      <TrayItem $w={69} $gap={7.5} $align="flex-end">
        <TextStack $align="flex-end">
          <StackLine $ls={-0.22}>9:19 AM</StackLine>
          <StackLine $ls={-0.23}>11/2/2023</StackLine>
        </TextStack>
      </TrayItem>
      <NotificationCount>20</NotificationCount>
    </Tray>
  </Taskbar>
);

export default function App() {
  return (
    <Desktop>
      <GlobalStyle />
      <BrowserTabs />
      <BrowserToolbar />
      <Storefront />
      <WindowsTaskbar />
    </Desktop>
  );
}
